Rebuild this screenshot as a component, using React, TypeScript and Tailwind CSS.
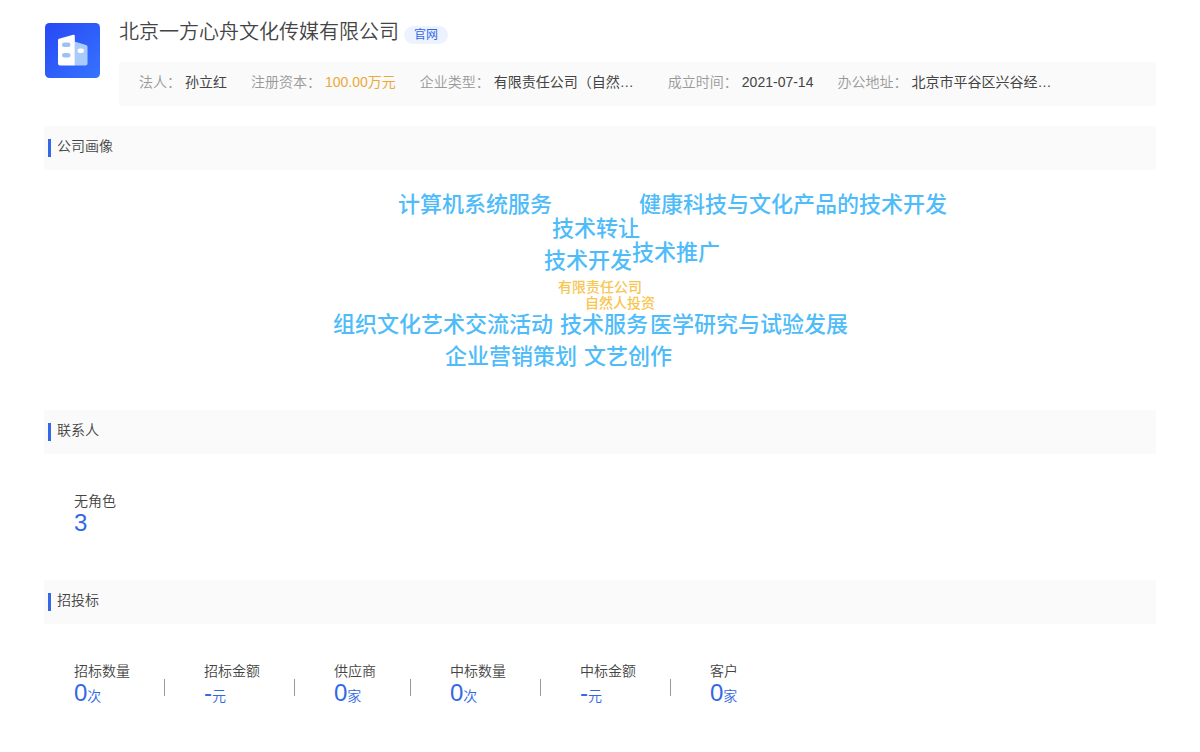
import { clsx } from "clsx";

const companyInfo = [
  { label: "法人", value: "孙立红" },
  { label: "注册资本", value: "100.00万元", highlight: true },
  { label: "企业类型", value: "有限责任公司（自然…", long: true },
  { label: "成立时间", value: "2021-07-14" },
  { label: "办公地址", value: "北京市平谷区兴谷经…", long: true },
];

// Cloud words, each with its own spot on the canvas
const cloudWords = [
  { text: "计算机系统服务", place: "left-[198px] top-[23px]" },
  { text: "健康科技与文化产品的技术开发", place: "left-[439px] top-[23px]" },
  { text: "技术转让", place: "left-[352px] top-[47px]" },
  { text: "技术推广", place: "left-[432px] top-[71px]" },
  { text: "技术开发", place: "left-[344px] top-[79px]" },
  { text: "有限责任公司", place: "left-[358px] top-[109px]", small: true },
  { text: "自然人投资", place: "left-[385px] top-[125px]", small: true },
  { text: "组织文化艺术交流活动", place: "left-[133px] top-[143px]" },
  { text: "技术服务", place: "left-[360px] top-[143px]" },
  { text: "医学研究与试验发展", place: "left-[450px] top-[143px]" },
  { text: "企业营销策划", place: "left-[245px] top-[175px]" },
  { text: "文艺创作", place: "left-[384px] top-[175px]" },
];

const contactStats = [{ label: "无角色", value: "3", unit: "" }];

const bidStats = [
  { label: "招标数量", value: "0", unit: "次" },
  { label: "招标金额", value: "-", unit: "元" },
  { label: "供应商", value: "0", unit: "家" },
  { label: "中标数量", value: "0", unit: "次" },
  { label: "中标金额", value: "-", unit: "元" },
  { label: "客户", value: "0", unit: "家" },
];

function CompanyLogo() {
  return (
    <svg
      viewBox="0 0 55 55"
      className="ml-px h-[55px] w-[55px] shrink-0"
      aria-hidden="true"
    >
      <defs>
        <linearGradient id="logo-bg" x1="0" y1="0" x2="1" y2="1">
          <stop offset="0" stopColor="#2748f5" />
          <stop offset="1" stopColor="#3673ff" />
        </linearGradient>
      </defs>
      <rect width="55" height="55" rx="4.5" fill="url(#logo-bg)" />
      <path
        d="M29.5 18.5 41 22c.9.3 1.5 1 1.5 2v16.500c0 1.200-.8 2-2 2h-11z"
        fill="#a9cbfb"
      />
      <path
        d="M14 15.800 28.200 11.800c.9-.2 1.600.3 1.600 1.200v29.500H15c-1.200 0-2-.8-2-2V17.200c0-.7.3-1.200 1-1.400z"
        fill="#fff"
      />
      <rect x="17" y="19.500" width="8.500" height="4.600" rx="2.300" fill="#9fbff5" />
      <rect x="17" y="30" width="8.500" height="4.600" rx="2.300" fill="#9fbff5" />
      <rect x="32.500" y="25.500" width="6.500" height="4.600" rx="2.300" fill="#fff" />
    </svg>
  );
}

function SectionTitle({ title }: { title: string }) {
  return (
    <div className="flex h-11 items-center bg-[#fafafa] px-1">
      <span className="h-[18px] w-[3px] bg-[#3268e6]" />
      <h2 className="ml-1.5 pb-1 text-sm">{title}</h2>
    </div>
  );
}

type Stat = { label: string; value: string; unit: string };

function StatList({ items }: { items: Stat[] }) {
  return (
    <div className="flex px-[30px] pt-9 pb-10">
      {items.map((item, index) => (
        <div key={item.label} className="flex items-center">
          {index > 0 && (
            <span className="mt-1 mr-[39px] ml-[34px] h-[17px] w-px bg-[#999]" />
          )}
          <div>
            <div className="text-sm leading-[22px]">{item.label}</div>
            <div className="h-7 text-sm leading-[22px] text-[#3268e6]">
              <span className="text-2xl leading-[22px]">{item.value}</span>
              {item.unit}
            </div>
          </div>
        </div>
      ))}
    </div>
  );
}

export default function App() {
  return (
    <main
      lang="zh-CN"
      className="bg-white px-11 pt-[23px] font-['Liberation_Sans','Noto_Sans_CJK_SC',sans-serif] font-[350] text-[#444]"
    >
      {/* Company header */}
      <header className="flex">
        <CompanyLogo />
        <div className="ml-[19px] min-w-0 flex-1">
          <div className="flex h-[39px] items-start">
            <h1 className="text-xl leading-[18px]">
              北京一方心舟文化传媒有限公司
            </h1>
            <a
              href="#"
              className="mt-[3px] ml-[5px] rounded-full bg-[#edf3fe] px-2.5 text-xs leading-[18px] font-normal text-[#3268e6]"
            >
              官网
            </a>
          </div>
          <dl className="flex min-h-11 items-center gap-6 bg-[#fafafa] px-5 pb-1 text-sm">
            {companyInfo.map((item) => (
              <div key={item.label} className="flex shrink-0 gap-1">
                <dt className="text-[#999]">{item.label}：</dt>
                <dd
                  className={clsx(
                    "font-normal",
                    item.long && "w-[150px]",
                    item.highlight ? "text-[#eba938]" : "text-[#444]"
                  )}
                >
                  {item.value}
                </dd>
              </div>
            ))}
          </dl>
        </div>
      </header>

      {/* Company portrait */}
      <section className="mt-5">
        <SectionTitle title="公司画像" />
        <div className="relative mx-auto h-60 max-w-[800px]">
          {cloudWords.map((word) => (
            <span
              key={word.text}
              className={clsx(
                "absolute font-medium whitespace-nowrap",
                word.place,
                word.small
                  ? "text-sm leading-4 text-[#f8c54f]"
                  : "text-[22px] leading-6 text-[#4fbcfa]"
              )}
            >
              {word.text}
            </span>
          ))}
        </div>
      </section>

      {/* Contacts */}
      <section>
        <SectionTitle title="联系人" />
        <StatList items={contactStats} />
      </section>

      {/* Bidding */}
      <section>
        <SectionTitle title="招投标" />
        <StatList items={bidStats} />
      </section>
    </main>
  );
}
